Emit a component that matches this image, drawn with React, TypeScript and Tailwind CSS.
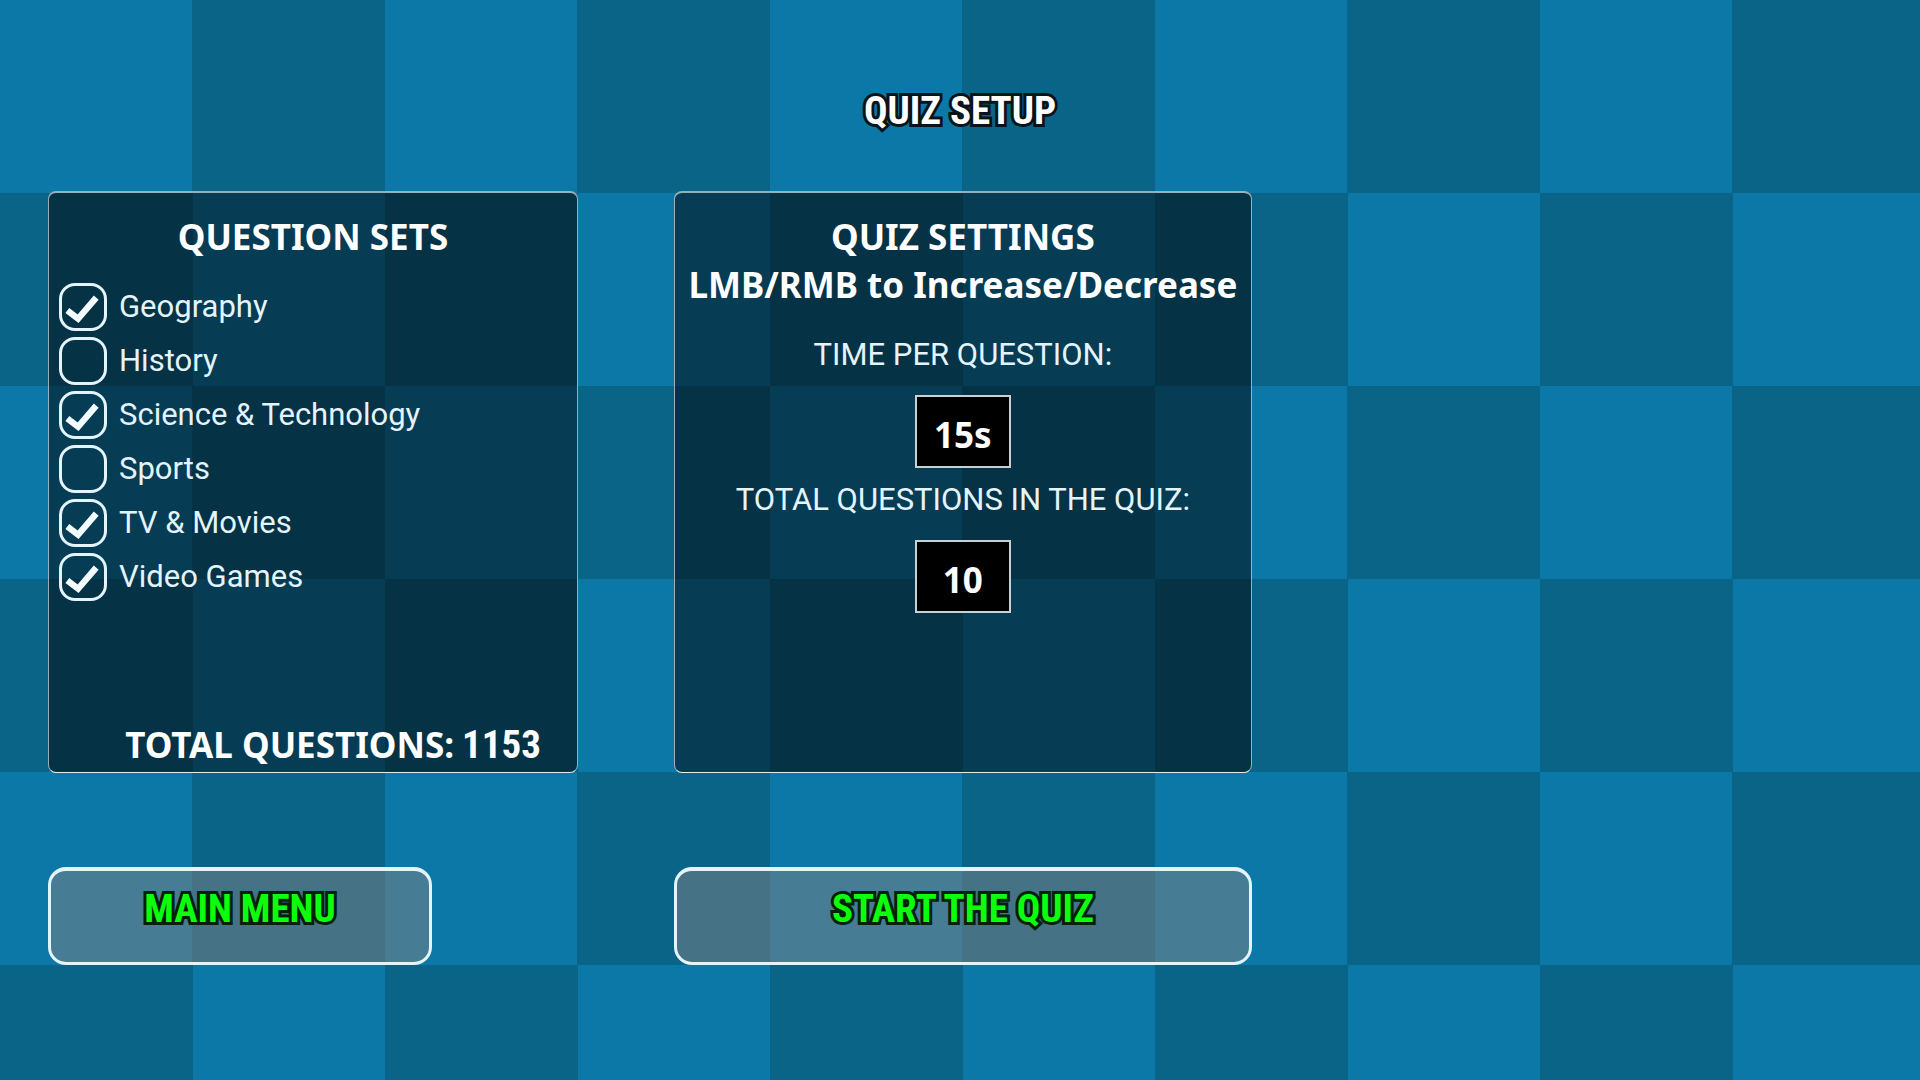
import { useState } from 'react';
import type { ReactNode } from 'react';

const QUESTION_SETS = [
  { id: 'geography', label: 'Geography', enabled: true },
  { id: 'history', label: 'History', enabled: false },
  { id: 'science', label: 'Science & Technology', enabled: true },
  { id: 'sports', label: 'Sports', enabled: false },
  { id: 'tv', label: 'TV & Movies', enabled: true },
  { id: 'games', label: 'Video Games', enabled: true },
];

function Panel({ children }: { children: ReactNode }) {
  return (
    <section className="flex min-h-[582px] flex-col rounded-lg border border-t-2 border-white/60 border-b-white/90 bg-black/50 pt-5">
      {children}
    </section>
  );
}

function SetCheckbox({ id, label, enabled }: { id: string; label: string; enabled: boolean }) {
  const [checked, setChecked] = useState(enabled);

  return (
    <li className="flex items-center gap-3">
      <span className="relative size-12 shrink-0">
        <input
          id={id}
          type="checkbox"
          checked={checked}
          onChange={(e) => setChecked(e.target.checked)}
          className="peer block size-full appearance-none rounded-2xl border-3 border-[#e4f4fc]"
        />
        <svg viewBox="0 0 49 49" className="pointer-events-none absolute inset-0 hidden size-full peer-checked:block">
          <path d="M8.5 28 L19.5 36.5 L38 15" fill="none" stroke="#f4fbff" strokeWidth="6.5" />
        </svg>
      </span>
      <label htmlFor={id} className="font-[Roboto,sans-serif] text-[31px] leading-10 text-[#e4f4fc]">
        {label}
      </label>
    </li>
  );
}

type StepperProps = { label: string; value: number; unit?: string; step: number; onChange: (v: number) => void };

// left click goes up, right click goes down
function Stepper({ label, value, unit = '', step, onChange }: StepperProps) {
  return (
    <div className="flex flex-col items-center gap-4">
      <h3 className="font-[Roboto,sans-serif] text-[31px] leading-12 text-[#e4f4fc]">{label}</h3>
      <button
        type="button"
        aria-label={`${label} ${value}${unit}`}
        onClick={() => onChange(value + step)}
        onContextMenu={(e) => {
          e.preventDefault();
          onChange(Math.max(step, value - step));
        }}
        className="h-[73px] w-24 border-2 border-[#c8d0d4] bg-black pt-1.5 text-[35px] leading-12 font-bold text-white"
      >
        {value}
        {unit}
      </button>
    </div>
  );
}

function MenuButton({ children, className }: { children: ReactNode; className: string }) {
  return (
    <button
      type="button"
      className={`h-[98px] rounded-[18px] border-3 border-t-4 border-[#e4f4fc] bg-[#808080]/50 pb-4 font-['Roboto_Condensed',sans-serif] text-[39px] leading-12 font-bold text-[#0cff0c] [-webkit-text-stroke:6px_#032008] [paint-order:stroke] ${className}`}
    >
      {children}
    </button>
  );
}

export default function App() {
  const [seconds, setSeconds] = useState(15);
  const [total, setTotal] = useState(10);

  return (
    <main className="min-h-screen bg-[#0c78a8] bg-[conic-gradient(#0a6488_25%,#0c78a8_0_50%,#0a6488_0_75%,#0c78a8_0)] bg-[size:385px_386px] pt-[87px] font-['Noto_Sans',sans-serif] text-white">
      <h1 className="text-center font-['Roboto_Condensed',sans-serif] text-[39px] leading-12 font-bold [-webkit-text-stroke:6px_#08141a] [paint-order:stroke]">
        QUIZ SETUP
      </h1>

      <div className="mt-14 grid grid-cols-[27.6vw_30.1vw] gap-x-[5vw] gap-y-[94px] pl-[2.5vw]">
        <Panel>
          <h2 className="text-center text-[35px] leading-12 font-bold">QUESTION SETS</h2>
          <ul className="mt-[22px] flex flex-col gap-1.5 pl-[10px]">
            {QUESTION_SETS.map((set) => (
              <SetCheckbox key={set.id} {...set} />
            ))}
          </ul>
          <p className="mt-auto mb-[3px] flex items-baseline justify-end gap-2 pr-9 text-[35px] leading-12 font-bold">
            TOTAL QUESTIONS:
            <span className="font-['Roboto_Condensed',sans-serif] text-[39px]">1153</span>
          </p>
        </Panel>

        <Panel>
          <h2 className="text-center text-[35px] leading-12 font-bold">QUIZ SETTINGS</h2>
          <p className="text-center text-[35px] leading-12 font-bold">LMB/RMB to Increase/Decrease</p>
          <div className="mt-[22px] flex flex-col gap-2">
            <Stepper label="TIME PER QUESTION:" value={seconds} unit="s" step={5} onChange={setSeconds} />
            <Stepper label="TOTAL QUESTIONS IN THE QUIZ:" value={total} step={5} onChange={setTotal} />
          </div>
        </Panel>

        <MenuButton className="w-[20vw]">MAIN MENU</MenuButton>
        <MenuButton className="w-full">START THE QUIZ</MenuButton>
      </div>
    </main>
  );
}
